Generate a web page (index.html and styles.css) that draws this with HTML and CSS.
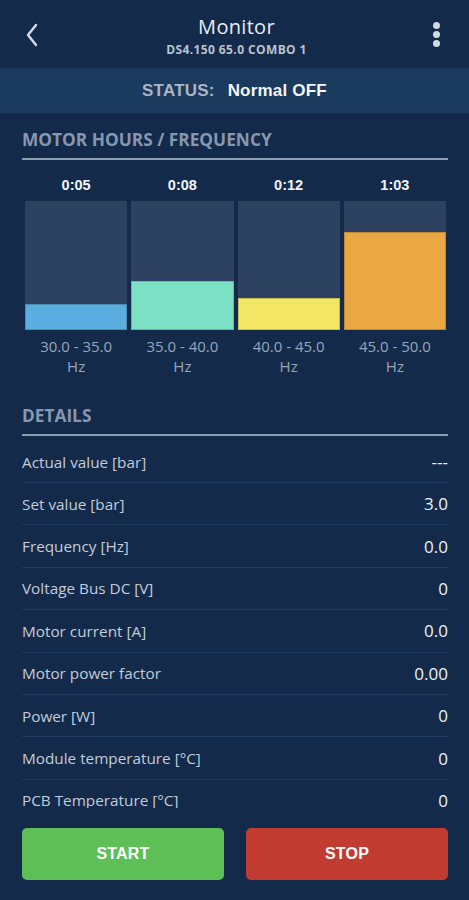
FILE: index.html
```html
<!DOCTYPE html>
<html lang="en">
<head>
<meta charset="utf-8">
<title>Monitor</title>
<link rel="stylesheet" href="styles.css">
</head>
<body>
<div class="app">
  <header class="topbar">
    <div class="back">
      <svg width="16" height="26" viewBox="0 0 16 26"><path d="M12 3 L4 13 L12 23" fill="none" stroke="#d7dee8" stroke-width="2.4" stroke-linecap="round" stroke-linejoin="round"/></svg>
    </div>
    <div class="titles">
      <div class="title">Monitor</div>
      <div class="subtitle">DS4.150 65.0 COMBO 1</div>
    </div>
    <div class="menu">
      <span class="dot"></span><span class="dot"></span><span class="dot"></span>
    </div>
  </header>
  <div class="status">
    <span class="status-label">STATUS:</span>
    <span class="status-value">Normal OFF</span>
  </div>
  <main class="content">
    <section class="section">
      <h2 class="section-title">MOTOR HOURS / FREQUENCY</h2>
      <div class="chart">
        <div class="col">
          <div class="hours">0:05</div>
          <div class="bar"><div class="fill fill-blue" style="height:26px"></div></div>
          <div class="range">30.0 - 35.0<br>Hz</div>
        </div>
        <div class="col">
          <div class="hours">0:08</div>
          <div class="bar"><div class="fill fill-green" style="height:49px"></div></div>
          <div class="range">35.0 - 40.0<br>Hz</div>
        </div>
        <div class="col">
          <div class="hours">0:12</div>
          <div class="bar"><div class="fill fill-yellow" style="height:32px"></div></div>
          <div class="range">40.0 - 45.0<br>Hz</div>
        </div>
        <div class="col">
          <div class="hours">1:03</div>
          <div class="bar"><div class="fill fill-orange" style="height:98px"></div></div>
          <div class="range">45.0 - 50.0<br>Hz</div>
        </div>
      </div>
    </section>
    <section class="section details">
      <h2 class="section-title">DETAILS</h2>
      <ul class="rows">
        <li class="row"><span class="label">Actual value [bar]</span><span class="value">---</span></li>
        <li class="row"><span class="label">Set value [bar]</span><span class="value">3.0</span></li>
        <li class="row"><span class="label">Frequency [Hz]</span><span class="value">0.0</span></li>
        <li class="row"><span class="label">Voltage Bus DC [V]</span><span class="value">0</span></li>
        <li class="row"><span class="label">Motor current [A]</span><span class="value">0.0</span></li>
        <li class="row"><span class="label">Motor power factor</span><span class="value">0.00</span></li>
        <li class="row"><span class="label">Power [W]</span><span class="value">0</span></li>
        <li class="row"><span class="label">Module temperature [°C]</span><span class="value">0</span></li>
        <li class="row"><span class="label">PCB Temperature [°C]</span><span class="value">0</span></li>
      </ul>
    </section>
  </main>
  <footer class="actions">
    <button class="btn btn-start">START</button>
    <button class="btn btn-stop">STOP</button>
  </footer>
</div>
</body>
</html>
```

FILE: styles.css
```css
* { box-sizing: border-box; }
html, body { margin: 0; padding: 0; }
body {
  background: #132a4b;
  font-family: "Open Sans", "Noto Sans", sans-serif;
  color: #e6ebf2;
}
.app {
  width: 469px;
  height: 900px;
  display: flex;
  flex-direction: column;
  overflow: hidden;
  background: #132a4b;
}
.topbar {
  height: 68px;
  flex: none;
  background: #142a4a;
  display: flex;
  align-items: center;
  padding: 0 22px 0 24px;
}
.back {
  width: 30px;
  display: flex;
  align-items: center;
  padding-top: 2px;
}
.titles {
  flex: 1;
  display: flex;
  flex-direction: column;
  align-items: center;
  padding-left: 2px;
  padding-top: 4px;
}
.title {
  font-size: 20px;
  line-height: 24px;
  color: #e9edf2;
  letter-spacing: 0.3px;
}
.subtitle {
  font-size: 12px;
  font-weight: 700;
  line-height: 14px;
  color: #b9c3cf;
  margin-top: 4px;
  letter-spacing: 0.4px;
}
.menu {
  width: 30px;
  display: flex;
  flex-direction: column;
  align-items: flex-end;
  gap: 2px;
  padding-right: 7px;
}
.dot {
  width: 7px;
  height: 7px;
  border-radius: 50%;
  background: #d3d9e2;
}
.status {
  height: 45px;
  flex: none;
  background: #1a3a5e;
  display: flex;
  align-items: center;
  justify-content: center;
  gap: 13px;
  font-family: "Liberation Sans", Arial, sans-serif;
  font-size: 17px;
}
.status-label {
  color: #aab6c4;
  font-weight: 700;
  letter-spacing: 0.2px;
}
.status-value {
  color: #f3f5f8;
  font-weight: 700;
  letter-spacing: 0.2px;
}
.content {
  flex: 1;
  overflow: hidden;
  padding: 0 21px 0 22px;
}
.section-title {
  margin: 0;
  font-size: 17.3px;
  font-weight: 700;
  line-height: 22px;
  color: #8798ae;
  padding-bottom: 7px;
  border-bottom: 2px solid #8d9eb3;
}
.section:first-child { padding-top: 16px; }
.chart {
  display: flex;
  gap: 4px;
  padding: 0 2px 0 3px;
}
.col {
  flex: 1;
  display: flex;
  flex-direction: column;
  align-items: stretch;
}
.hours {
  font-family: "Liberation Sans", Arial, sans-serif;
  font-weight: 700;
  font-size: 14.5px;
  line-height: 16px;
  text-align: center;
  color: #f1f4f7;
  padding-top: 17px;
  padding-bottom: 8px;
}
.bar {
  height: 129px;
  background: #2c4260;
  display: flex;
  flex-direction: column;
  justify-content: flex-end;
}
.fill { border: 1px solid rgba(0,0,0,0.18); }
.fill-blue { background: #5aaee0; }
.fill-green { background: #7ce1c4; }
.fill-yellow { background: #f3e765; }
.fill-orange { background: #eaa843; }
.range {
  font-size: 15px;
  line-height: 20px;
  text-align: center;
  color: #98a6b7;
  padding-top: 6px;
}
.details { padding-top: 29px; }
.rows {
  list-style: none;
  margin: 0;
  padding: 0;
}
.row {
  height: 42.4px;
  display: flex;
  align-items: center;
  justify-content: space-between;
  border-bottom: 1px solid #1f3b5f;
}
.row:first-child { height: 47px; padding-top: 5px; }
.label {
  font-size: 15.3px;
  color: #c3ccd7;
}
.value {
  font-size: 17px;
  color: #eef1f5;
}
.actions {
  flex: none;
  height: 92px;
  display: flex;
  gap: 22px;
  padding: 20px 21px 20px 22px;
  background: #132a4b;
}
.btn {
  flex: 1;
  border: none;
  border-radius: 5px;
  font-family: "Liberation Sans", Arial, sans-serif;
  font-weight: 700;
  font-size: 16px;
  color: #ffffff;
  letter-spacing: 0.2px;
}
.btn-start { background: #5dbf55; }
.btn-stop { background: #c23b31; }
```
